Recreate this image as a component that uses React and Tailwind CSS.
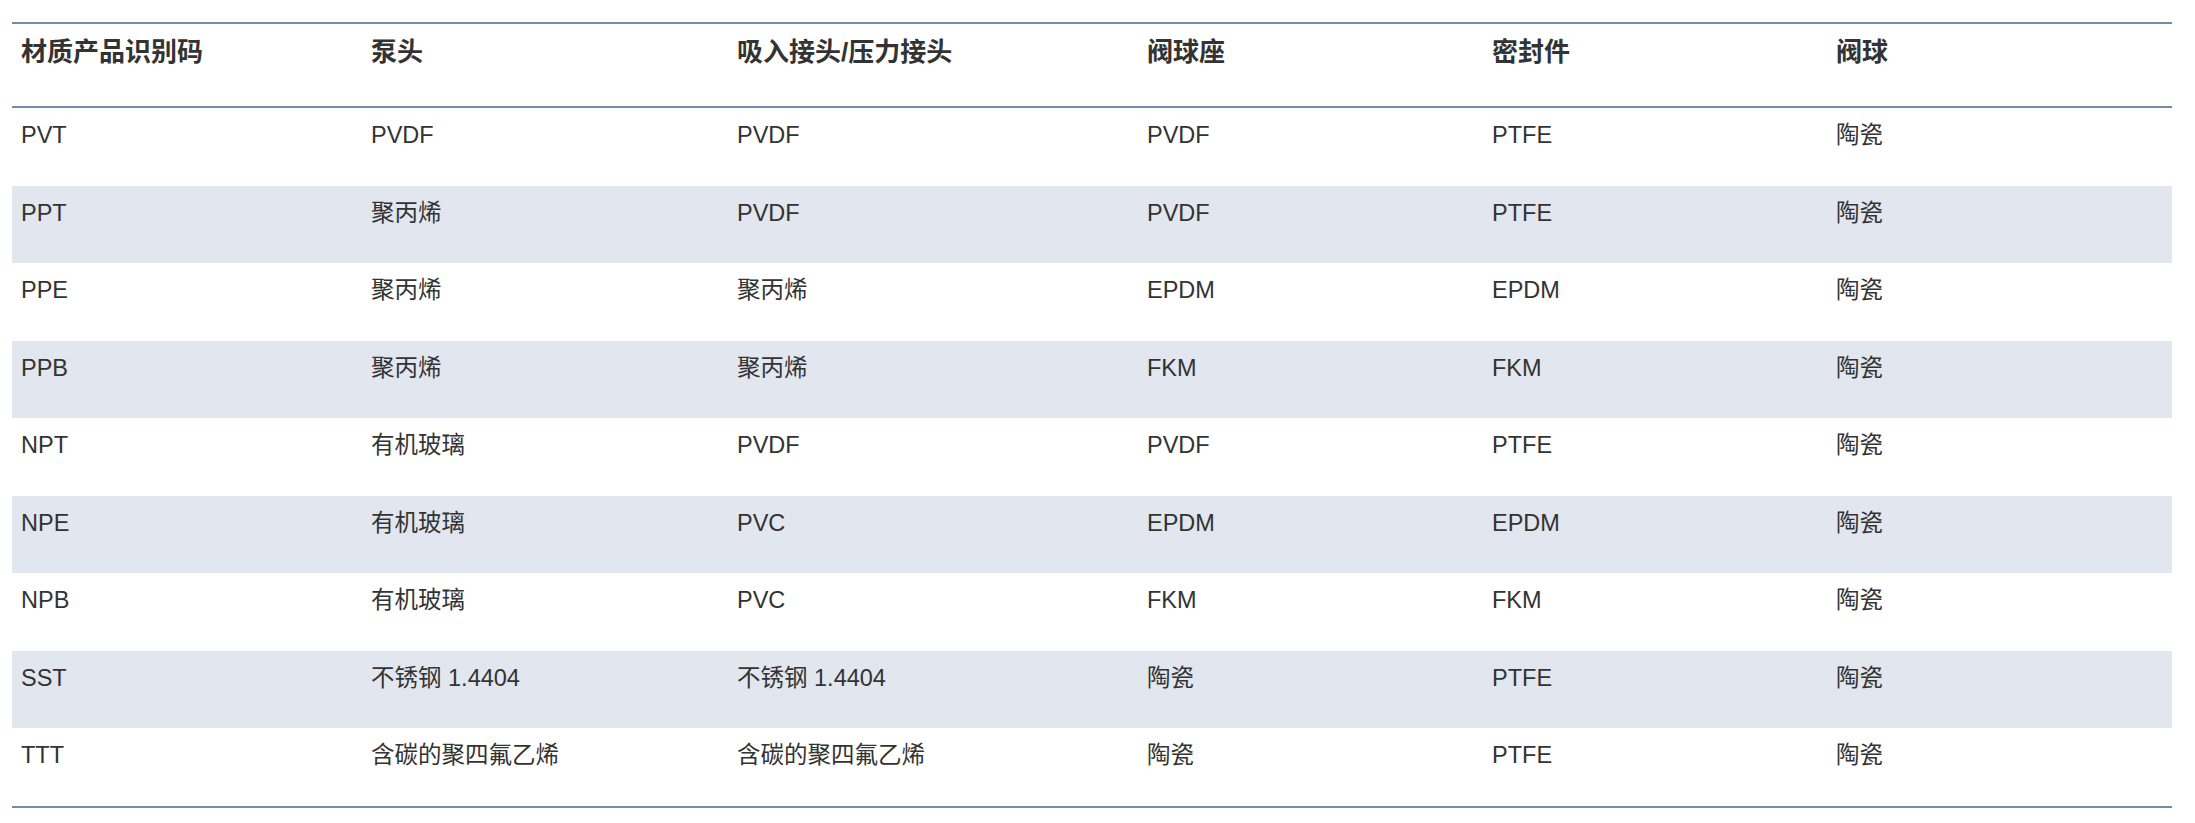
import React from "react";

const headers = ["材质产品识别码", "泵头", "吸入接头/压力接头", "阀球座", "密封件", "阀球"];
const rows = [
  ["PVT", "PVDF", "PVDF", "PVDF", "PTFE", "陶瓷"],
  ["PPT", "聚丙烯", "PVDF", "PVDF", "PTFE", "陶瓷"],
  ["PPE", "聚丙烯", "聚丙烯", "EPDM", "EPDM", "陶瓷"],
  ["PPB", "聚丙烯", "聚丙烯", "FKM", "FKM", "陶瓷"],
  ["NPT", "有机玻璃", "PVDF", "PVDF", "PTFE", "陶瓷"],
  ["NPE", "有机玻璃", "PVC", "EPDM", "EPDM", "陶瓷"],
  ["NPB", "有机玻璃", "PVC", "FKM", "FKM", "陶瓷"],
  ["SST", "不锈钢 1.4404", "不锈钢 1.4404", "陶瓷", "PTFE", "陶瓷"],
  ["TTT", "含碳的聚四氟乙烯", "含碳的聚四氟乙烯", "陶瓷", "PTFE", "陶瓷"],
];

const cols = "grid grid-cols-[350px_366px_410px_345px_344px_345px]";

export default function App() {
  return (
    <div
      className="pt-[22px] pl-[12px] bg-white min-h-[823px]"
      style={{ fontFamily: '"Liberation Sans", "Noto Sans CJK SC", sans-serif' }}
    >
      <div className="w-[2160px] border-y-2 border-[#768aaa]">
        <div className={`${cols} h-[84px] border-b-2 border-[#768aaa]`}>
          {headers.map((h) => (
            <div key={h} className="pl-[9px] pt-[9px] text-[26px] leading-[1.5] font-bold text-[#333333]">
              {h}
            </div>
          ))}
        </div>
        {rows.map((r, i) => (
          <div
            key={r[0]}
            className={`${cols} h-[77.5px] ${i % 2 === 1 ? "bg-[#e1e6ef]" : "bg-white"}`}
          >
            {r.map((c, j) => (
              <div key={j} className="pl-[9px] pt-[10px] text-[23.5px] leading-[1.5] text-[#333333]">
                {c}
              </div>
            ))}
          </div>
        ))}
      </div>
    </div>
  );
}
